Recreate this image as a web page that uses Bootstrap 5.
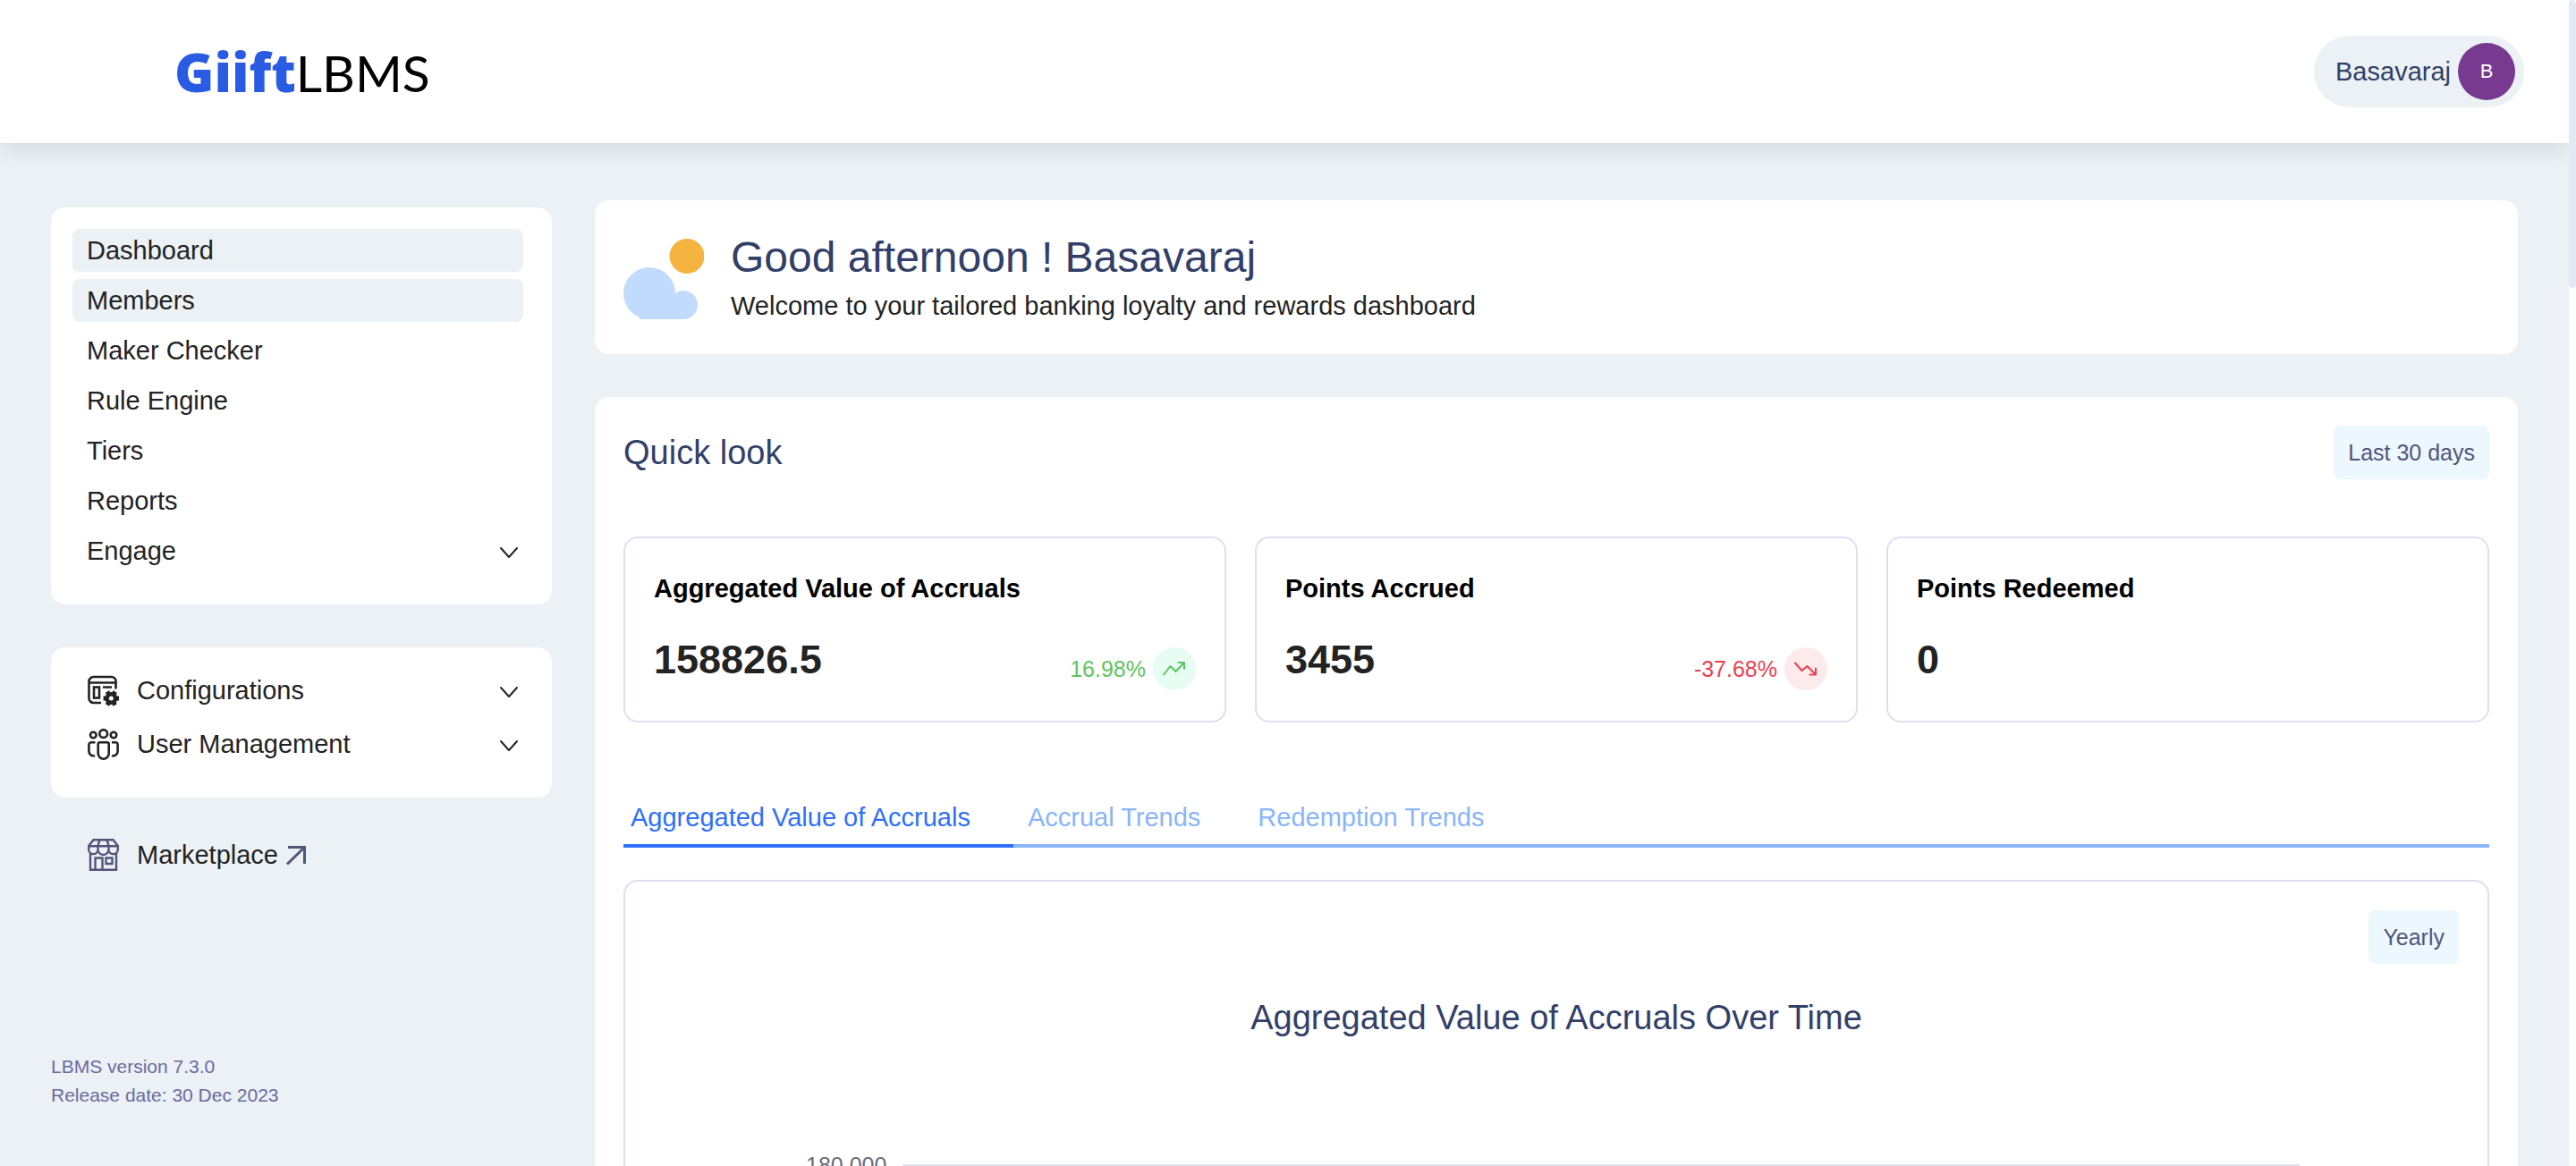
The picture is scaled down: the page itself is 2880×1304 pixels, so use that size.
<!DOCTYPE html>
<html lang="en">
<head>
<meta charset="utf-8">
<meta name="viewport" content="width=device-width, initial-scale=1">
<title>GiiftLBMS Dashboard</title>
<link href="https://cdn.jsdelivr.net/npm/bootstrap@5.3.0/dist/css/bootstrap.min.css" rel="stylesheet">
<style>
  :root { --ink: #323f68; --body: #232323; --soft: #ebf1f4; --line: #dddff0; --muted: #52557a; --edge: 57px; }
  body { height: 100vh; overflow: hidden; background: var(--soft); color: var(--body); font-family: "Liberation Sans", Arial, sans-serif; font-size: 29px; line-height: 40px; }
  .page-area { height: 100vh; overflow: hidden; margin-right: 8px; }
  .scroll-track { position: fixed; top: 0; right: 0; width: 8px; height: 100vh; background: #fff; }
  .scroll-thumb { height: 322px; border-radius: 4px; background: #e3eaf6; }
  .topbar { height: 160px; padding: 0 50px 0 195px; background: #fff; box-shadow: 0 8px 24px rgba(0, 0, 0, .09); }
  .brand-logo { font-family: Lato, sans-serif; font-size: 57px; line-height: 72px; color: #000; text-decoration: none; }
  .brand-logo b { font-family: "Open Sans", sans-serif; font-size: 60px; font-weight: 800; color: #295be3; }
  .user-pill { height: 80px; padding: 8px 10px 8px 24px; gap: 8px; border: 0; border-radius: 40px; background: var(--soft); color: var(--ink); }
  .avatar { width: 64px; height: 64px; border-radius: 50%; background: #773a90; color: #fff; font-size: 22px; }
  .layout { padding: 64px var(--edge) 0; gap: 48px; }
  .sidebar { width: 560px; padding-top: 8px; }
  .panel { border: 0; border-radius: 16px; background: #fff; }
  .side-panel { padding: 24px 32px 24px 24px; }
  .side-link { display: flex; align-items: center; width: 100%; height: 48px; padding: 0 6px 0 16px; border: 0; border-radius: 8px; background: none; color: var(--body); text-align: left; text-decoration: none; }
  .side-link.active { background: var(--soft); }
  .main-nav { gap: 8px; padding-bottom: 36px; }
  .admin-nav { gap: 12px; padding-bottom: 36px; }
  .nav-icon { width: 36px; height: 36px; margin-right: 20px; flex: none; }
  .chev { width: 20px; height: 20px; margin-left: auto; margin-top: 4px; }
  .market { margin: 0 24px; }
  .version { margin-top: 197px; font-size: 21px; line-height: 32px; color: #6b6aa0; }
  h1, h2, h3, p { margin: 0; }
  .welcome { padding: 28px 32px 24px; gap: 30px; height: 172px; }
  .welcome h1 { font-size: 48px; line-height: 60px; font-weight: 400; color: var(--ink); }
  .welcome p { line-height: 48px; }
  h2 { font-size: 38px; line-height: 48px; font-weight: 400; color: var(--ink); }
  .quick { padding: 32px 32px 0; }
  .btn-period { padding: 12px 16px; border: 0; border-radius: 8px; background: #ecf7fe; color: var(--muted); font-size: 25px; line-height: 36px; }
  .stats { --bs-gutter-x: 32px; padding-top: 64px; }
  .outline { border: 2px solid var(--line); border-radius: 16px; }
  .stat { height: 208px; padding: 36px 32px 34px; }
  .stat h3 { font-size: 29px; line-height: 40px; font-weight: 700; color: #000; }
  .stat-value { font-size: 45px; line-height: 56px; font-weight: 700; margin-bottom: 6px; }
  .change { gap: 8px; font-size: 25px; line-height: 48px; }
  .change-dot { width: 48px; height: 48px; border-radius: 50%; }
  .up { color: #5dc560; } .up .change-dot { background: #e7fdf4; }
  .down { color: #ec4150; } .down .change-dot { background: #fdeaeb; }
  .trend-tabs { margin-top: 78px; border-bottom: 4px solid #89b5fb; }
  .trend-tabs .tab-btn { margin-bottom: -4px; padding: 8px 48px 10px 16px; border: 0; border-bottom: 4px solid transparent; background: none; color: #89b5fb; }
  .trend-tabs .tab-btn.active { padding-left: 8px; border-color: #2e6ffd; color: #2e6ffd; }
  .chart { margin-top: 36px; padding: 32px; }
  .chart h2 { padding-top: 36px; text-align: center; }
  .axis { padding: 123px 178px 400px 170px; gap: 18px; font-size: 25px; line-height: 36px; color: #6b6c7d; }
  .gridline { height: 2px; background: #dfe3f0; }
</style>
<script src="https://cdn.jsdelivr.net/npm/bootstrap@5.3.0/dist/js/bootstrap.bundle.min.js"></script>
</head>
<body>
<div class="page-area">
  <header class="topbar position-relative d-flex align-items-center justify-content-between">
    <a class="brand-logo" href="#"><b>Giift</b>LBMS</a>
    <button type="button" class="user-pill d-flex align-items-center">Basavaraj
      <span class="avatar d-flex align-items-center justify-content-center">B</span>
    </button>
  </header>

  <div class="layout d-flex align-items-start">
    <aside class="sidebar flex-shrink-0">
      <nav class="panel side-panel main-nav d-flex flex-column" aria-label="Main">
        <a class="side-link active" href="#">Dashboard</a>
        <a class="side-link active" href="#">Members</a>
        <a class="side-link" href="#">Maker Checker</a>
        <a class="side-link" href="#">Rule Engine</a>
        <a class="side-link" href="#">Tiers</a>
        <a class="side-link" href="#">Reports</a>
        <button type="button" class="side-link">Engage
          <svg class="chev" viewBox="0 0 20 20" fill="none" stroke="#232323" stroke-width="2" stroke-linecap="round" stroke-linejoin="round"><path d="M1 5l9 10 9-10"/></svg>
        </button>
      </nav>

      <nav class="panel side-panel admin-nav d-flex flex-column mt-5" aria-label="Administration">
        <button type="button" class="side-link">
          <svg class="nav-icon" viewBox="0 0 36 36" fill="none" stroke="#232323" stroke-width="2.600">
            <path d="M16 32H7.500A5 5 0 0 1 2.500 27V8A5 5 0 0 1 7.500 3h20A5 5 0 0 1 32.500 8v8.500M2.500 9.500h30M18 14.500h10"/>
            <rect x="8" y="14.500" width="6" height="12"/>
            <g stroke-width="5"><path d="M22.900 19.400l8.800 15.200M31.700 19.400l-8.800 15.200M18.600 27h17.400"/></g>
            <circle cx="27.300" cy="27" r="7" fill="#232323" stroke="none"/>
            <circle cx="27.300" cy="27" r="2.500" fill="#fff" stroke="none"/>
          </svg>Configurations
          <svg class="chev" viewBox="0 0 20 20" fill="none" stroke="#232323" stroke-width="2" stroke-linecap="round" stroke-linejoin="round"><path d="M1 5l9 10 9-10"/></svg>
        </button>
        <button type="button" class="side-link">
          <svg class="nav-icon" viewBox="0 0 36 36" fill="none" stroke="#232323" stroke-width="2.600">
            <circle cx="18.700" cy="6.500" r="4.400"/><circle cx="7.300" cy="8" r="3.300"/><circle cx="30" cy="8" r="3.300"/>
            <path d="M14.700 16.300h8a2 2 0 0 1 2 2v10.200a6 6.200 0 0 1-12 0V18.300a2 2 0 0 1 2-2z"/>
            <path d="M9.500 16.300H5a2.600 2.600 0 0 0-2.600 2.600V26a5 5 0 0 0 6.600 5M28 16.300h4a2.600 2.600 0 0 1 2.600 2.600V26a5 5 0 0 1-6.600 5"/>
          </svg>User Management
          <svg class="chev" viewBox="0 0 20 20" fill="none" stroke="#232323" stroke-width="2" stroke-linecap="round" stroke-linejoin="round"><path d="M1 5l9 10 9-10"/></svg>
        </button>
      </nav>

      <div class="market pt-4"><a class="side-link mt-3" href="#">
        <svg class="nav-icon" viewBox="0 0 36 36" fill="none" stroke="#52557a" stroke-width="2.400">
          <path d="M4 16v18.800h29V16M7.500 1.200h22L34.800 8v4a5 5 0 0 1-10.300 0 5.800 5.800 0 0 1-12 0A5 5 0 0 1 2.200 12V8zM2.200 8.300h32.600M12.500 13V8L14.500 1.200M24.500 13V8L22.500 1.200"/>
          <path d="M9.500 34.500V21.500h8v13M21.500 21.500h7v6.500h-7z"/>
        </svg>Marketplace
        <svg class="ms-2" width="24" height="24" viewBox="0 0 24 24" fill="none" stroke="#52557a" stroke-width="3"><path d="M3 3.500h18.500V22M21 4 2 22.500"/></svg>
      </a></div>

      <div class="version">LBMS version 7.3.0<br>Release date: 30 Dec 2023</div>
    </aside>

    <main class="flex-grow-1">
      <section class="panel welcome d-flex align-items-center">
        <svg width="90" height="90" viewBox="0 0 90 90"><circle cx="71" cy="19.500" r="19.500" fill="#f4b43f"/><g fill="#c1dbfe"><circle cx="29" cy="61" r="29"/><circle cx="67" cy="74" r="16"/><path d="M18 70h50v20H18z"/></g></svg>
        <div>
          <h1>Good afternoon ! Basavaraj</h1>
          <p>Welcome to your tailored banking loyalty and rewards dashboard</p>
        </div>
      </section>

      <section class="panel quick mt-5">
        <div class="d-flex justify-content-between align-items-center">
          <h2>Quick look</h2>
          <button type="button" class="btn-period">Last 30 days</button>
        </div>

        <div class="row stats">
          <div class="col-4"><div class="outline stat d-flex flex-column justify-content-between">
            <h3>Aggregated Value of Accruals</h3>
            <div class="d-flex justify-content-between align-items-end">
              <div class="stat-value">158826.5</div>
              <div class="change up d-flex">16.98%
                <span class="change-dot d-flex align-items-center justify-content-center"><svg width="28" height="28" viewBox="0 0 28 28" fill="none" stroke="currentColor" stroke-width="2" stroke-linecap="round" stroke-linejoin="round"><path d="M2 20.500 9.500 11l6 6L25 7M18.500 7H25v7"/></svg></span>
              </div>
            </div>
          </div></div>
          <div class="col-4"><div class="outline stat d-flex flex-column justify-content-between">
            <h3>Points Accrued</h3>
            <div class="d-flex justify-content-between align-items-end">
              <div class="stat-value">3455</div>
              <div class="change down d-flex">-37.68%
                <span class="change-dot d-flex align-items-center justify-content-center"><svg width="28" height="28" viewBox="0 0 28 28" fill="none" stroke="currentColor" stroke-width="2" stroke-linecap="round" stroke-linejoin="round"><path d="M2 7.500 9.500 16l6-5L25 20.500M18.500 20.500H25v-7"/></svg></span>
              </div>
            </div>
          </div></div>
          <div class="col-4"><div class="outline stat d-flex flex-column justify-content-between">
            <h3>Points Redeemed</h3>
            <div class="stat-value">0</div>
          </div></div>
        </div>

        <div class="trend-tabs d-flex" role="tablist">
          <button type="button" role="tab" class="tab-btn active" aria-selected="true">Aggregated Value of Accruals</button>
          <button type="button" role="tab" class="tab-btn" aria-selected="false">Accrual Trends</button>
          <button type="button" role="tab" class="tab-btn" aria-selected="false">Redemption Trends</button>
        </div>

        <div class="outline chart">
          <div class="d-flex justify-content-end"><button type="button" class="btn-period">Yearly</button></div>
          <h2>Aggregated Value of Accruals Over Time</h2>
          <div class="axis d-flex align-items-center">
            <span>180,000</span>
            <div class="gridline flex-grow-1"></div>
          </div>
        </div>
      </section>
    </main>
  </div>
</div>
<div class="scroll-track"><div class="scroll-thumb"></div></div>
</body>
</html>
